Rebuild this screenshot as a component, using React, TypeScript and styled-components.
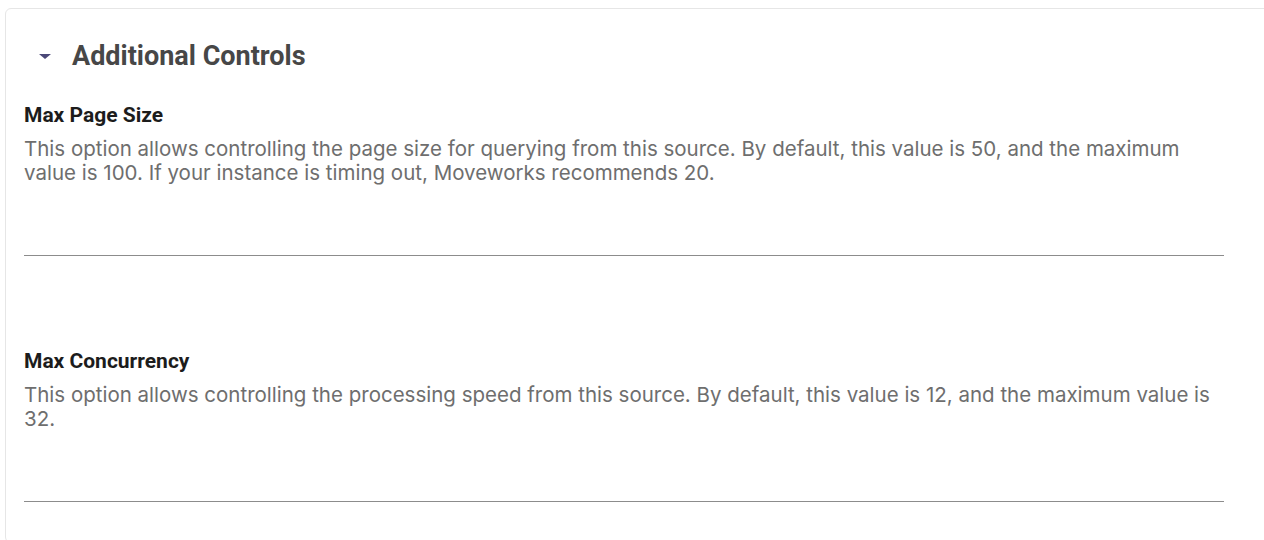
import styled, { createGlobalStyle } from "styled-components";

const GlobalStyle = createGlobalStyle`
  html, body {
    margin: 0;
    padding: 0;
    background: #ffffff;
    overflow: hidden;
  }
`;

const Page = styled.div`
  height: 540px;
  overflow: hidden;
  padding: 8px 0 0 5px;
  box-sizing: border-box;
`;

const Card = styled.section`
  width: 1300px;
  border: 1px solid #e6e6e6;
  border-radius: 6px;
  padding: 18px 0 40px 18px;
  box-sizing: border-box;
`;

const Header = styled.div`
  display: flex;
  align-items: center;
  height: 58px;
  gap: 21px;
`;

const Caret = styled.span`
  width: 0;
  height: 0;
  margin-left: 15px;
  border-left: 6px solid transparent;
  border-right: 6px solid transparent;
  border-top: 5px solid #4b4878;
`;

const Title = styled.h2`
  margin: 0;
  font-family: Roboto, "Liberation Sans", sans-serif;
  font-weight: 700;
  font-size: 27px;
  color: #474747;
`;

const FieldList = styled.div`
  display: flex;
  flex-direction: column;
  gap: 93px;
  width: 1200px;
  margin-top: 18px;
`;

const Field = styled.div`
  display: flex;
  flex-direction: column;
`;

const Label = styled.label`
  font-family: Roboto, "Liberation Sans", sans-serif;
  font-weight: 700;
  font-size: 21px;
  line-height: 24px;
  color: #1c1c1c;
`;

const Description = styled.p`
  margin: 10px 0 0;
  font-family: Inter, "Liberation Sans", sans-serif;
  font-size: 20.5px;
  line-height: 24px;
  color: #6e6e6e;
`;

const Input = styled.input`
  box-sizing: border-box;
  height: 71px;
  border: none;
  border-bottom: 1px solid #8c8c8c;
  outline: none;
  padding: 0;
  font-size: 18px;
  background: transparent;
`;

const fields = [
  {
    label: "Max Page Size",
    text: "This option allows controlling the page size for querying from this source. By default, this value is 50, and the maximum value is 100. If your instance is timing out, Moveworks recommends 20.",
  },
  {
    label: "Max Concurrency",
    text: "This option allows controlling the processing speed from this source. By default, this value is 12, and the maximum value is 32.",
  },
];

export default function App() {
  return (
    <>
      <GlobalStyle />
      <Page>
        <Card>
          <Header>
            <Caret />
            <Title>Additional Controls</Title>
          </Header>
          <FieldList>
            {fields.map((f) => (
              <Field key={f.label}>
                <Label>{f.label}</Label>
                <Description>{f.text}</Description>
                <Input />
              </Field>
            ))}
          </FieldList>
        </Card>
      </Page>
    </>
  );
}
